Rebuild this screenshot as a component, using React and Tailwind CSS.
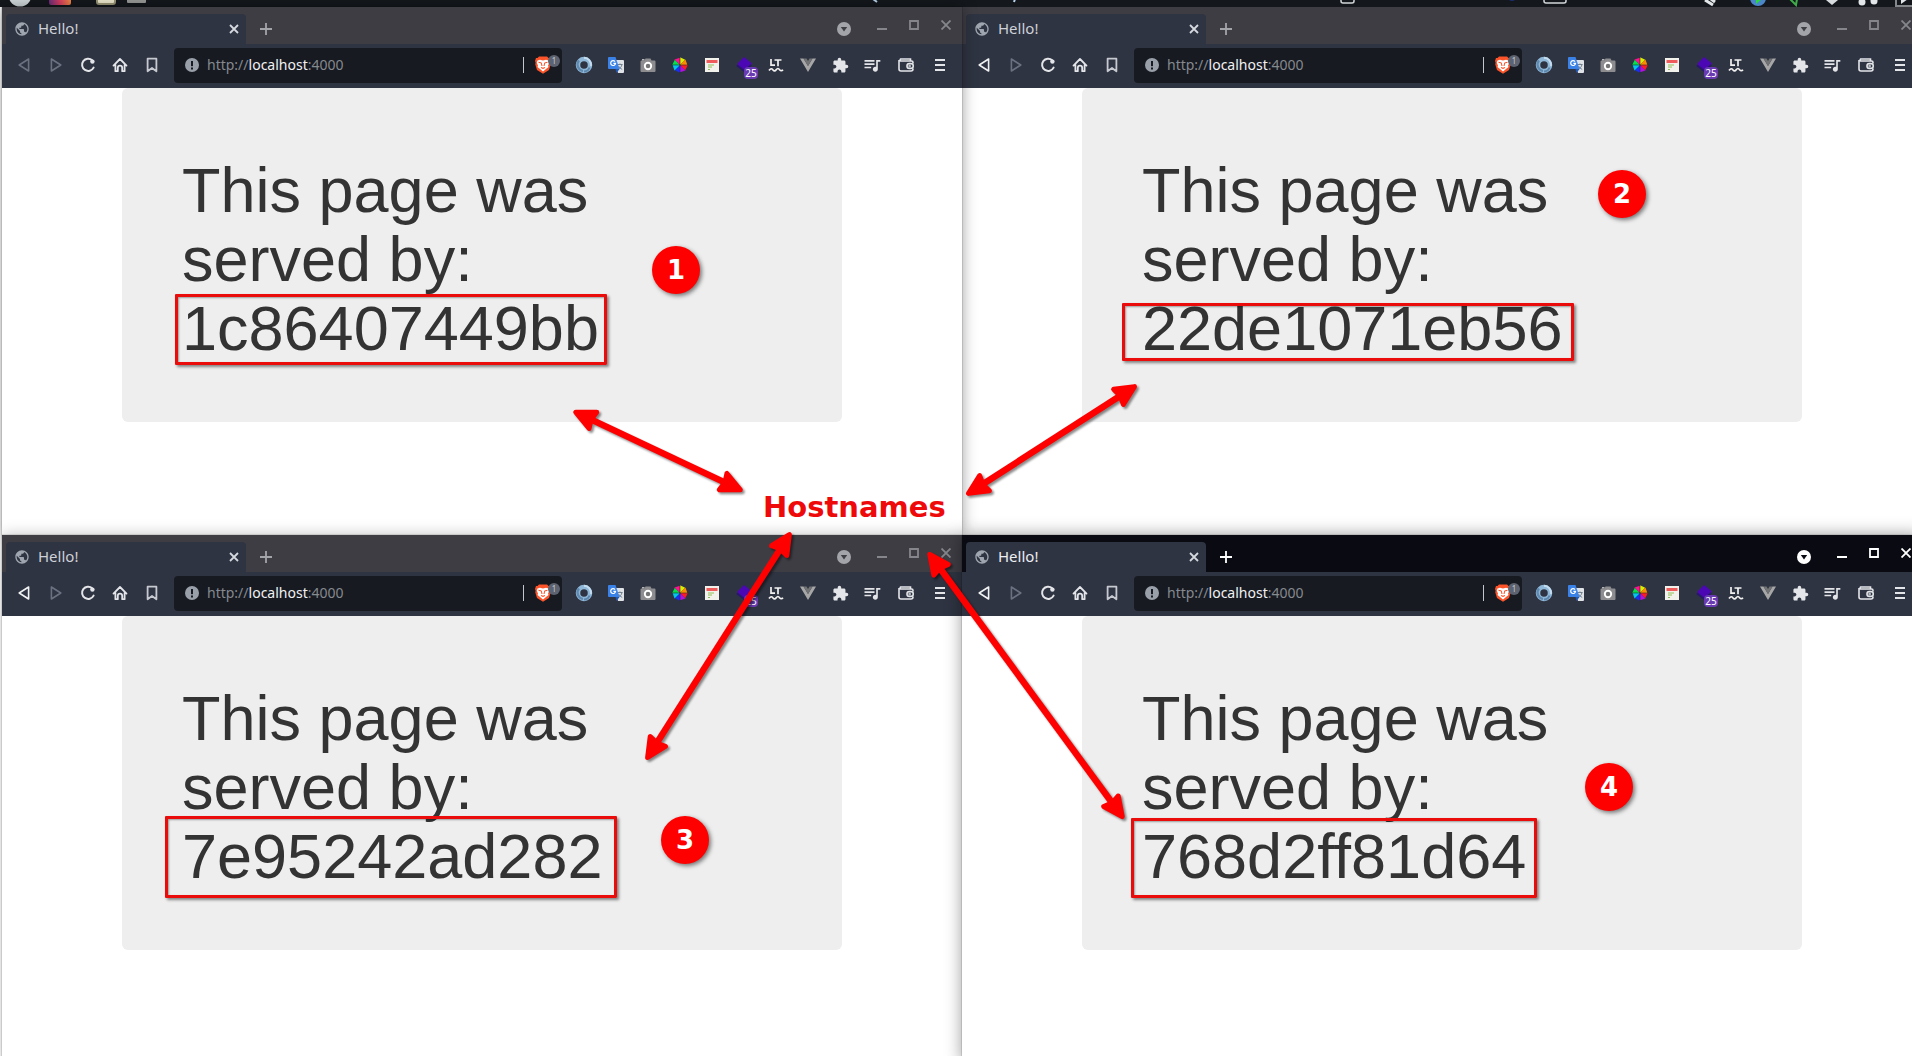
import React from "react";
import { MdPublic, MdExtension, MdQueueMusic } from "react-icons/md";

const Back = () => (
  <svg width="16" height="16" viewBox="0 0 16 16" fill="none" stroke="currentColor" strokeWidth="1.6" strokeLinejoin="round">
    <path d="M12.6 2v12L3.2 8z" />
  </svg>
);
const Forward = () => (
  <svg width="16" height="16" viewBox="0 0 16 16" fill="none" stroke="currentColor" strokeWidth="1.6" strokeLinejoin="round">
    <path d="M3.4 2v12L12.8 8z" />
  </svg>
);
const Reload = () => (
  <svg width="16" height="16" viewBox="0 0 16 16" fill="none" stroke="currentColor" strokeWidth="2" strokeLinecap="round">
    <path d="M12.2 3.2A6.1 6.1 0 1 0 13.6 10.6" />
    <circle cx="12.4" cy="4.6" r="2.2" fill="currentColor" stroke="none" />
  </svg>
);
const Home = () => (
  <svg width="16" height="16" viewBox="0 0 16 16" fill="none" stroke="currentColor" strokeWidth="1.8" strokeLinejoin="round" strokeLinecap="round">
    <path d="M1.5 8.6 8 2l6.5 6.6M3.4 7.4V14.2H5.8V10.8a2.2 2.2 0 0 1 4.4 0V14.2h2.4V7.4" />
  </svg>
);
const Bookmark = () => (
  <svg width="16" height="16" viewBox="0 0 16 16" fill="none" stroke="currentColor" strokeWidth="1.8" strokeLinejoin="round">
    <path d="M3.6 1.7h8.8v12.6L8 11l-4.400 3.300z" />
  </svg>
);
const Info = () => (
  <svg className="shrink-0" width="14" height="14" viewBox="0 0 14 14">
    <circle cx="7" cy="7" r="7" fill="#9aa0a9" />
    <rect x="6" y="3" width="2" height="5.2" fill="#171a21" />
    <rect x="6" y="9.5" width="2" height="2" fill="#171a21" />
  </svg>
);
const Shield = () => (
  <svg width="18" height="18" viewBox="0 0 18 18">
    <path d="M5 .5h8l1.500 1.500h1.500l1 3-.6 1.500.3 2-1.700 5.500L9 17.800 3 14 1.300 8.500l.3-2L1 5l1-3h1.500z" fill="#fb542b" />
    <path d="M3.500 4.500 6 3.800 9 4.500l3-.7 2.500.7.700 2-1.200 3.200.5 1.300-2.500 2L9 15.500 6 13l-2.500-2 .5-1.300-1.200-3.200z" fill="#fff" />
    <path d="M4.500 6.200 7.500 7M13.500 6.200 10.500 7M7.300 7 8 10M10.700 7 10 10M7 11.500l2 .8 2-.8" stroke="#fb542b" strokeWidth="1.100" fill="none" />
  </svg>
);
const Ring = () => (
  <svg width="18" height="18" viewBox="0 0 18 18" fill="none">
    <circle cx="9" cy="9" r="6" stroke="#8fb7d8" strokeWidth="4.5" />
    <path d="M4 4.500A6.500 6.500 0 0 0 8 15" stroke="#5f89ae" strokeWidth="2.200" />
    <path d="M9 1.800A7.200 7.200 0 0 1 16 10" stroke="#c5dcee" strokeWidth="2" />
    <path d="M14.500 11.500A6 6 0 0 1 9 15.500" stroke="#5c86ab" strokeWidth="2" />
  </svg>
);
const Translate = () => (
  <svg width="18" height="18" viewBox="0 0 18 18">
    <path d="M7 4h9a1 1 0 0 1 1 1v11a1 1 0 0 1-1 1h-5z" fill="#dfe2e6" />
    <path d="M10.500 8.500h5M13 7.500v1M15 8.500c-.5 2.500-2 4-4 5M11.500 10c.8 1.500 2 2.700 3.700 3.400" stroke="#72808c" strokeWidth="1" fill="none" />
    <path d="M2 1h6.500l4 12H2a1 1 0 0 1-1-1V2a1 1 0 0 1 1-1z" fill="#3b82e8" />
    <path d="M8.500 13h4l-3 4z" fill="#2058b8" />
    <path d="M8 5.600A2.400 2.400 0 1 0 8.500 7.400H6.400" stroke="#fff" strokeWidth="1.2" fill="none" />
  </svg>
);
const Camera = () => (
  <svg width="16" height="16" viewBox="0 0 16 16">
    <path d="M1.500 3.500H4.500L5.500 1.500h5l1 2h3a1 1 0 0 1 1 1V14a1 1 0 0 1-1 1h-13a1 1 0 0 1-1-1V4.500a1 1 0 0 1 1-1z" fill="#8d8d8f" />
    <rect x="2" y="2" width="2.500" height="1.500" fill="#b5b5b5" />
    <circle cx="8" cy="9" r="3.200" fill="#747476" stroke="#fff" strokeWidth="1.9" />
  </svg>
);
const WHEEL = ["#d8f000", "#ff8a00", "#ff1d25", "#b010e0", "#1a30f0", "#00c8e8", "#00e04a", "#ff1090"];
const Wheel = () => (
  <svg width="18" height="18" viewBox="-9 -9 18 18">
    <g transform="rotate(-90)">
      {WHEEL.map((c, i) => (
        <path key={c} fill={c} transform={`rotate(${i * 45})`} d="M0 0 7.800 0 5.200 5.200z" />
      ))}
    </g>
    <path d="M0-8.500V8.500M-8.500 0H8.500" stroke="#26282e" strokeWidth=".6" />
  </svg>
);
const News = () => (
  <svg width="14" height="14" viewBox="0 0 14 14">
    <rect width="14" height="14" fill="#f3f1ec" />
    <rect x="1.500" y="2" width="11" height="3" fill="#ef5a5a" />
    <path d="M3 7h6M3 9h4M3 11.500h2" stroke="#8fbf5a" strokeWidth="1" />
  </svg>
);
const Layers = () => (
  <svg width="18" height="18" viewBox="0 0 18 18">
    <path d="M9 3.500 17 9.500 9 16 1 10z" fill="#28186a" />
    <path d="M9 1 17 7.500 9 13.500 2 8z" fill="#4b07b4" />
  </svg>
);
const LanguageTool = () => (
  <svg width="16" height="16" viewBox="0 0 16 16" fill="none" stroke="#f2f2f2" strokeWidth="1.7">
    <path d="M3 2V8.200H7M6.500 3h7M10 3v6.200" />
    <path d="M1 13.500c1.500-2.200 2.700-2.200 3.800-.8 1.300 1.600 2.300 1.600 3.400 0 1.200-1.600 2.300-1.600 3.400 0 1.100 1.300 2.300 1.300 3.400 0" />
  </svg>
);
const Vue = () => (
  <svg width="16" height="16" viewBox="0 0 16 16">
    <path d="M0 1.500h3.500L8 9l4.500-7.500H16L8 15z" fill="#a6a6a6" />
    <path d="M3.500 1.500h3L8 4l1.500-2.500h3L8 9z" fill="#717375" />
  </svg>
);
const Wallet = () => (
  <svg width="16" height="16" viewBox="0 0 16 16" fill="none" stroke="currentColor" strokeWidth="1.6">
    <path d="M15 6.500V5.500a1.500 1.500 0 0 0-1.500-1.500H2.500A1.500 1.500 0 0 1 2.500 2H12.500V4M1 3V12a2 2 0 0 0 2 2H13a2 2 0 0 0 2-2v-.5" />
    <rect x="9" y="6.600" width="6.200" height="4.800" rx="2.200" />
    <circle cx="11.600" cy="9" r=".4" />
  </svg>
);
const Menu = () => (
  <svg width="12" height="14" viewBox="0 0 12 14" stroke="currentColor" strokeWidth="2">
    <path d="M1 2h10M1 7h10M1 12h10" />
  </svg>
);

const ToolButton = ({ label, children, className = "" }) => (
  <button type="button" aria-label={label} className={`relative flex h-8 w-8 shrink-0 items-center justify-center ${className}`}>
    {children}
  </button>
);

function TitleBar({ active }) {
  return (
    <div className={`flex h-[37px] items-end pl-1 ${active ? "bg-[#090a12] text-white" : "bg-[#3e3d44] text-[#a3a4aa]"}`}>
      <div className="flex h-[30px] w-60 items-center rounded-t bg-[#2f3442] pr-1 pl-2">
        <MdPublic size={16} className="text-[#a0a6b0]" />
        <span className={`ml-2 grow pb-0.5 text-[15px] leading-5 ${active ? "text-[#eceef2]" : "text-[#ced1d8]"}`}>Hello!</span>
        <button type="button" aria-label="Close tab" className="flex h-4 w-4 items-center justify-center text-[#d5d8de]">
          <svg width="10" height="10" viewBox="0 0 10 10" stroke="currentColor" strokeWidth="1.8"><path d="M1 1l8 8M9 1 1 9" /></svg>
        </button>
      </div>
      <button type="button" aria-label="New tab" className="flex h-[30px] w-10 items-center justify-center">
        <svg width="12" height="12" viewBox="0 0 12 12" stroke="currentColor" strokeWidth="1.8"><path d="M6 0v12M0 6h12" /></svg>
      </button>
      <div className="grow" />
      <button type="button" aria-label="Search tabs" className="mr-1.5 flex h-[30px] w-8 items-center justify-center">
        <svg width="14" height="14" viewBox="0 0 14 14">
          <circle cx="7" cy="7" r="7" fill="currentColor" />
          <path d="M3.800 5h6.400L7 9.500z" fill={active ? "#090a12" : "#3e3d44"} />
        </svg>
      </button>
      <div className={`flex h-[37px] ${active ? "text-white" : "text-[#85868c]"}`}>
        <button type="button" aria-label="Minimize" className="flex h-9 w-8 items-center justify-center">
          <svg width="10" height="10" viewBox="0 0 10 10"><path d="M0 8h10v2H0z" fill="currentColor" /></svg>
        </button>
        <button type="button" aria-label="Maximize" className="flex h-9 w-8 items-center justify-center">
          <svg width="10" height="10" viewBox="0 0 10 10" fill="none" stroke="currentColor" strokeWidth="1.8"><path d="M1 1h8v8H1z" /></svg>
        </button>
        <button type="button" aria-label="Close" className="flex h-9 w-8 items-center justify-center">
          <svg width="10" height="10" viewBox="0 0 10 10" stroke="currentColor" strokeWidth="1.8"><path d="M.5.5l9 9M9.500.5l-9 9" /></svg>
        </button>
      </div>
    </div>
  );
}

function Toolbar({ canGoBack }) {
  return (
    <div className="flex h-11 items-center bg-[#2f3442] px-1.5 pb-0.5 text-[#e3e5e9]">
      <ToolButton label="Back" className={canGoBack ? "text-[#f0f1f3]" : "text-[#6b7180]"}><Back /></ToolButton>
      <ToolButton label="Forward" className="text-[#6b7180]"><Forward /></ToolButton>
      <ToolButton label="Reload"><Reload /></ToolButton>
      <ToolButton label="Home"><Home /></ToolButton>
      <ToolButton label="Bookmark" className="text-[#c6c9d0]"><Bookmark /></ToolButton>
      <div className="ml-1.5 flex h-[35px] grow items-center rounded bg-[#171a21] pl-[11px]">
        <Info />
        <div role="textbox" aria-label="Address" contentEditable suppressContentEditableWarning className="ml-2 grow pb-px text-[14px] leading-5 text-[#858990] outline-none">
          http://<span className="text-[#f1f2f4]">localhost</span>:4000
        </div>
        <div className="h-4 w-px bg-[#c3c6cc]" />
        <button type="button" aria-label="Brave Shields" className="relative ml-2.5 flex h-8 w-7 items-center">
          <Shield />
          <span className="absolute top-1.5 right-0.5 flex h-3 w-3 items-center justify-center rounded-full bg-[#5d6370] text-[8px] text-[#c5c8ce]">1</span>
        </button>
      </div>
      <div className="ml-1.5 flex">
        <ToolButton label="Ring"><Ring /></ToolButton>
        <ToolButton label="Translate"><Translate /></ToolButton>
        <ToolButton label="Screenshot"><Camera /></ToolButton>
        <ToolButton label="Color picker"><Wheel /></ToolButton>
        <ToolButton label="News"><News /></ToolButton>
        <ToolButton label="Layers">
          <Layers />
          <span className="absolute right-0.5 bottom-0.5 flex h-3 w-3.5 items-center justify-center rounded-sm bg-[#6a3ab2] text-[10px] text-white">25</span>
        </ToolButton>
        <ToolButton label="LanguageTool"><LanguageTool /></ToolButton>
        <ToolButton label="Vue devtools"><Vue /></ToolButton>
        <ToolButton label="Extensions"><MdExtension size={17} /></ToolButton>
        <ToolButton label="Media"><MdQueueMusic size={20} /></ToolButton>
        <ToolButton label="Wallet" className="ml-0.5"><Wallet /></ToolButton>
        <ToolButton label="Menu" className="ml-0.5"><Menu /></ToolButton>
      </div>
    </div>
  );
}

function BrowserWindow({ host, active, canGoBack, className }) {
  return (
    <section className={`relative flex flex-col bg-white ${className}`}>
      <TitleBar active={active} />
      <Toolbar canGoBack={canGoBack} />
      <main className="grow pb-[113px]">
        <div className="mx-auto w-3/4 rounded-md bg-[#eeeeee] px-[60px] pt-[68px] pb-[59px]">
          <h1 className="font-['Liberation_Sans',sans-serif] text-[63px] leading-[69px] text-[#333333]">
            This page was<br />served by:<br />{host}
          </h1>
        </div>
      </main>
    </section>
  );
}

function SystemPanel() {
  return (
    <div className="h-[7px] overflow-hidden bg-[#14181c]">
      <svg width="1912" height="7" viewBox="0 0 1912 7" fill="none">
        <defs>
          <linearGradient id="launcher">
            <stop offset="0" stopColor="#6b2f7d" />
            <stop offset=".5" stopColor="#dd3e62" />
            <stop offset="1" stopColor="#f48a45" />
          </linearGradient>
        </defs>
        <circle cx="20" cy="-5" r="11.500" fill="#d3dcde" />
        <rect x="49" y="-10" width="22" height="15" rx="2" fill="url(#launcher)" />
        <rect x="97" y="-10" width="18" height="14" rx="2" fill="#f0ecd0" stroke="#9c9878" strokeWidth="2" />
        <rect x="127" y="-10" width="19" height="13" rx="1" fill="#9a9c9a" />
        <path d="M873-1l4 3M1015-1l-1 3" stroke="#b8d4ee" strokeWidth="2" />
        <rect x="1341" y="-8" width="13" height="11" rx="2" stroke="#d3d6d8" strokeWidth="1.5" />
        <circle cx="1512" cy="-3" r="4" fill="#1c2c6c" />
        <rect x="1544" y="-8" width="22" height="11" rx="2" stroke="#d3d6d8" strokeWidth="1.5" />
        <path d="M1705 0l8 5M1711-1l4 3" stroke="#e3e6e8" strokeWidth="3" />
        <circle cx="1758" cy="-2" r="8" fill="#4a86c8" />
        <path d="M1756-1h6l-6 5z" fill="#2bd93c" />
        <path d="M1790-1l6 6 1-6" stroke="#3fae49" strokeWidth="2" />
        <path d="M1826 0h12l-6 5z" fill="#d8dcde" />
        <circle cx="1862" cy="2" r="3.500" fill="#e3e6e8" />
        <circle cx="1874" cy="1" r="3.500" fill="#e3e6e8" />
        <rect x="1896" y="-10" width="20" height="16" stroke="#84888b" strokeWidth="2" />
        <path d="M1901-1h7l-7 5z" fill="#e3e6e8" />
      </svg>
    </div>
  );
}

const ARROWS = [
  [573, 411, 743, 491],
  [1137, 385, 966, 495],
  [791, 532, 646, 760],
  [928, 552, 1124, 819],
];

function Arrow({ ends: [x1, y1, x2, y2] }) {
  const length = Math.hypot(x2 - x1, y2 - y1);
  const angle = (Math.atan2(y2 - y1, x2 - x1) * 180) / Math.PI;
  return (
    <g transform={`translate(${x1} ${y1}) rotate(${angle})`} fill="#fe0000" stroke="#fe0000" strokeLinejoin="round">
      <path d={`M18 0H${length - 18}`} strokeWidth="6.5" />
      <path d="M3 0 22-9 20 0 22 9z" strokeWidth="5" />
      <path d="M-3 0-22-9-20 0-22 9z" strokeWidth="5" transform={`translate(${length} 0)`} />
    </g>
  );
}

const Frame = ({ className }) => (
  <div className={`absolute rounded-[1px] border-3 border-[#ea0b0b] shadow-[2px_2px_3px_rgba(0,0,0,0.45),inset_1px_1px_2px_rgba(0,0,0,0.35)] ${className}`} />
);

const Marker = ({ n, className }) => (
  <div className={`absolute flex h-12 w-12 items-center justify-center rounded-full bg-[#fe0000] font-['DejaVu_Sans',sans-serif] text-[26px] leading-none font-bold text-white shadow-[2px_2px_4px_rgba(0,0,0,0.5)] ${className}`}>
    {n}
  </div>
);

function Annotations() {
  return (
    <div className="pointer-events-none absolute inset-0 z-50">
      <Frame className="top-[294px] left-[175px] h-[71px] w-[432px]" />
      <Frame className="top-[303px] left-[1122px] h-[58px] w-[452px]" />
      <Frame className="top-[816px] left-[165px] h-[82px] w-[452px]" />
      <Frame className="top-[818px] left-[1131px] h-[80px] w-[406px]" />
      <Marker n={1} className="top-[246px] left-[652px]" />
      <Marker n={2} className="top-[170px] left-[1598px]" />
      <Marker n={3} className="top-[816px] left-[661px]" />
      <Marker n={4} className="top-[763px] left-[1585px]" />
      <p className="absolute top-[490px] left-[763px] font-['DejaVu_Sans',sans-serif] text-[29px] leading-[34px] font-bold text-[#ee0a0a]">Hostnames</p>
      <svg className="absolute inset-0 drop-shadow-[2px_2px_1px_rgba(0,0,0,0.45)]" width="1912" height="1056" viewBox="0 0 1912 1056">
        {ARROWS.map((ends) => <Arrow key={ends.join()} ends={ends} />)}
      </svg>
    </div>
  );
}

export default function App() {
  return (
    <div className="relative flex min-h-screen flex-col overflow-hidden bg-white font-['Noto_Sans',sans-serif]">
      <SystemPanel />
      <div className="-mr-2.5 ml-0.5 grid grow grid-cols-2 grid-rows-[auto_1fr]">
        <BrowserWindow host="1c86407449bb" className="z-20 shadow-[0_0_14px_rgba(0,0,0,0.4),0_0_1px_rgba(0,0,0,0.6)]" />
        <BrowserWindow host="22de1071eb56" canGoBack className="z-10" />
        <BrowserWindow host="7e95242ad282" canGoBack className="z-30 shadow-[0_0_14px_rgba(0,0,0,0.25),0_0_1px_rgba(0,0,0,0.6)]" />
        <BrowserWindow host="768d2ff81d64" active canGoBack className="z-40 shadow-[0_0_16px_rgba(0,0,0,0.4),0_0_1px_rgba(0,0,0,0.6)]" />
      </div>
      <Annotations />
    </div>
  );
}
